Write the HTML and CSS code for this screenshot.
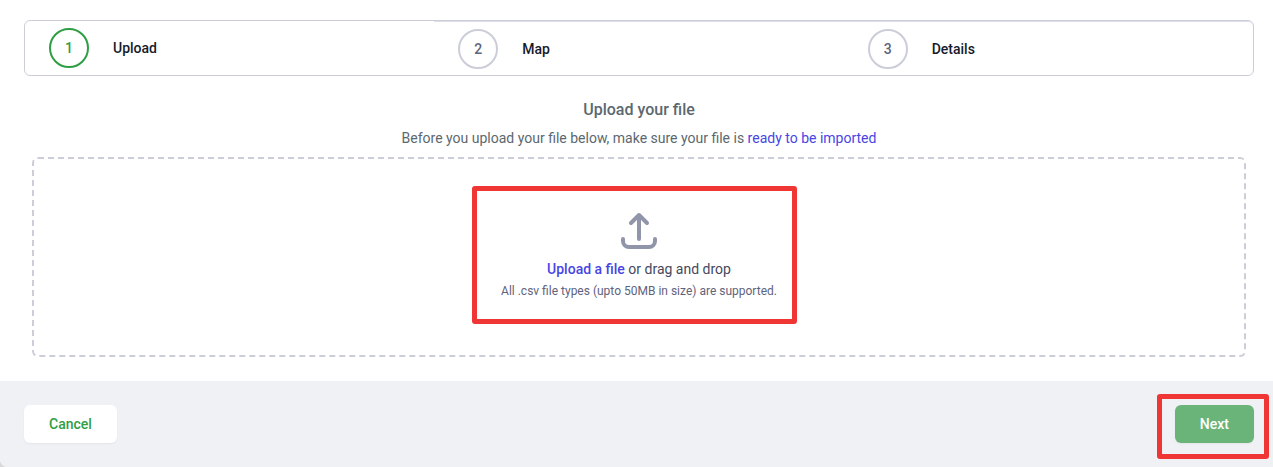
FILE: index.html
```html
<!DOCTYPE html>
<html lang="en">
<head>
    <meta charset="UTF-8">
    <meta name="viewport" content="width=device-width, initial-scale=1.0">
    <title>Upload your file</title>
    <link rel="stylesheet" href="styles.css">
</head>
<body>
    <div class="modal">
        <main class="content">
            <ol class="steps">
                <li class="step active">
                    <span class="step-number">1</span>
                    <span class="step-name">Upload</span>
                </li>
                <li class="step">
                    <span class="step-number">2</span>
                    <span class="step-name">Map</span>
                </li>
                <li class="step">
                    <span class="step-number">3</span>
                    <span class="step-name">Details</span>
                </li>
            </ol>

            <section class="upload">
                <h1>Upload your file</h1>
                <p class="hint">Before you upload your file below, make sure your file is <a href="#">ready to be imported</a></p>

                <div class="dropzone">
                    <div class="dropzone-inner highlight">
                        <svg class="upload-icon" viewBox="0 0 24 24" fill="none" stroke="currentColor" stroke-width="2" stroke-linecap="round" stroke-linejoin="round" aria-hidden="true">
                            <path d="M4 16v1a3 3 0 003 3h10a3 3 0 003-3v-1m-4-8l-4-4m0 0L8 8m4-4v12"/>
                        </svg>
                        <p class="drop-text">
                            <label class="file-label" for="file-upload">Upload a file</label>
                            <input class="file-input" type="file" id="file-upload" accept=".csv">
                            or drag and drop
                        </p>
                        <p class="drop-note">All .csv file types (upto 50MB in size) are supported.</p>
                    </div>
                </div>
            </section>
        </main>

        <footer class="footer">
            <button type="button" class="btn btn-cancel">Cancel</button>
            <div class="highlight highlight-next">
                <button type="button" class="btn btn-next">Next</button>
            </div>
        </footer>
    </div>
</body>
</html>
```
FILE: styles.css
```css
* {
    box-sizing: border-box;
}
body {
    font-family: Roboto, sans-serif;
    font-size: 14px;
    line-height: 20px;
    margin: 0;
    background-color: #d9d9dc;
    color: #161a2b;
}
h1, p, ol {
    margin: 0;
    padding: 0;
}
a {
    color: #4845e4;
    text-decoration: none;
}
.modal {
    display: flex;
    flex-direction: column;
    min-height: 100vh;
    background-color: #fff;
    border-bottom-left-radius: 8px;
    overflow: hidden;
}
.content {
    flex-grow: 1;
    padding: 20px 19px 24px 24px;
}

/* Steps */
.steps {
    display: grid;
    grid-template-columns: repeat(3, 1fr);
    align-items: start;
    list-style: none;
    border: 1px solid #cbced9;
    border-radius: 6px;
}
.step {
    display: flex;
    align-items: center;
    gap: 24px;
    padding: 7px 24px 6px;
    font-weight: 500;
}
.step + .step {
    border-top: 1px solid #dcdfe6;
}
.step:last-child {
    border-top-right-radius: 5px;
}
.step-number {
    display: flex;
    justify-content: center;
    align-items: center;
    width: 40px;
    height: 40px;
    border: 2px solid #cbced9;
    border-radius: 50%;
    color: #5f637c;
}
.active .step-number {
    border-color: #2f9e44;
    color: #2f9e44;
}

/* Upload */
.upload {
    padding: 22px 8px 0;
    text-align: center;
}
.upload h1 {
    font-size: 16px;
    line-height: 24px;
    font-weight: 500;
    color: #5b686f;
}
.hint {
    margin: 6px 0 9px;
    color: #5b686f;
}
.dropzone {
    display: flex;
    justify-content: center;
    padding: 48px 24px 56px;
    border: 2px dashed #cbced9;
    border-radius: 6px;
}
.upload-icon {
    display: block;
    width: 48px;
    height: 48px;
    margin: 0 auto 4px;
    color: #9095aa;
}
.drop-text {
    color: #45495e;
}
.file-label {
    color: #4845e4;
    font-weight: 500;
    cursor: pointer;
}
.file-input {
    position: absolute;
    width: 1px;
    height: 1px;
    opacity: 0;
}
.drop-note {
    margin-top: 4px;
    font-size: 12px;
    line-height: 16px;
    color: #5f637c;
}

/* Red frame around the important controls */
.highlight {
    position: relative;
}
.highlight::after {
    content: "";
    position: absolute;
    inset: -21px -20px -25px -29px;
    border: 5px solid #f03535;
    border-radius: 3px;
    pointer-events: none;
}
.highlight-next::after {
    inset: -11px -15px -16px -18px;
}

/* Footer */
.footer {
    display: flex;
    justify-content: space-between;
    padding: 24px 19px 24px 24px;
    background-color: #f0f1f5;
}
.btn {
    display: block;
    padding: 9px 25px;
    border: none;
    border-radius: 6px;
    font-family: inherit;
    font-size: 14px;
    line-height: 20px;
    font-weight: 500;
    cursor: pointer;
    box-shadow: 0 1px 2px rgba(0, 0, 0, 0.05);
}
.btn-cancel {
    background-color: #fff;
    color: #2f9e44;
}
.btn-next {
    background-color: #6ab47a;
    color: #fff;
}
```
